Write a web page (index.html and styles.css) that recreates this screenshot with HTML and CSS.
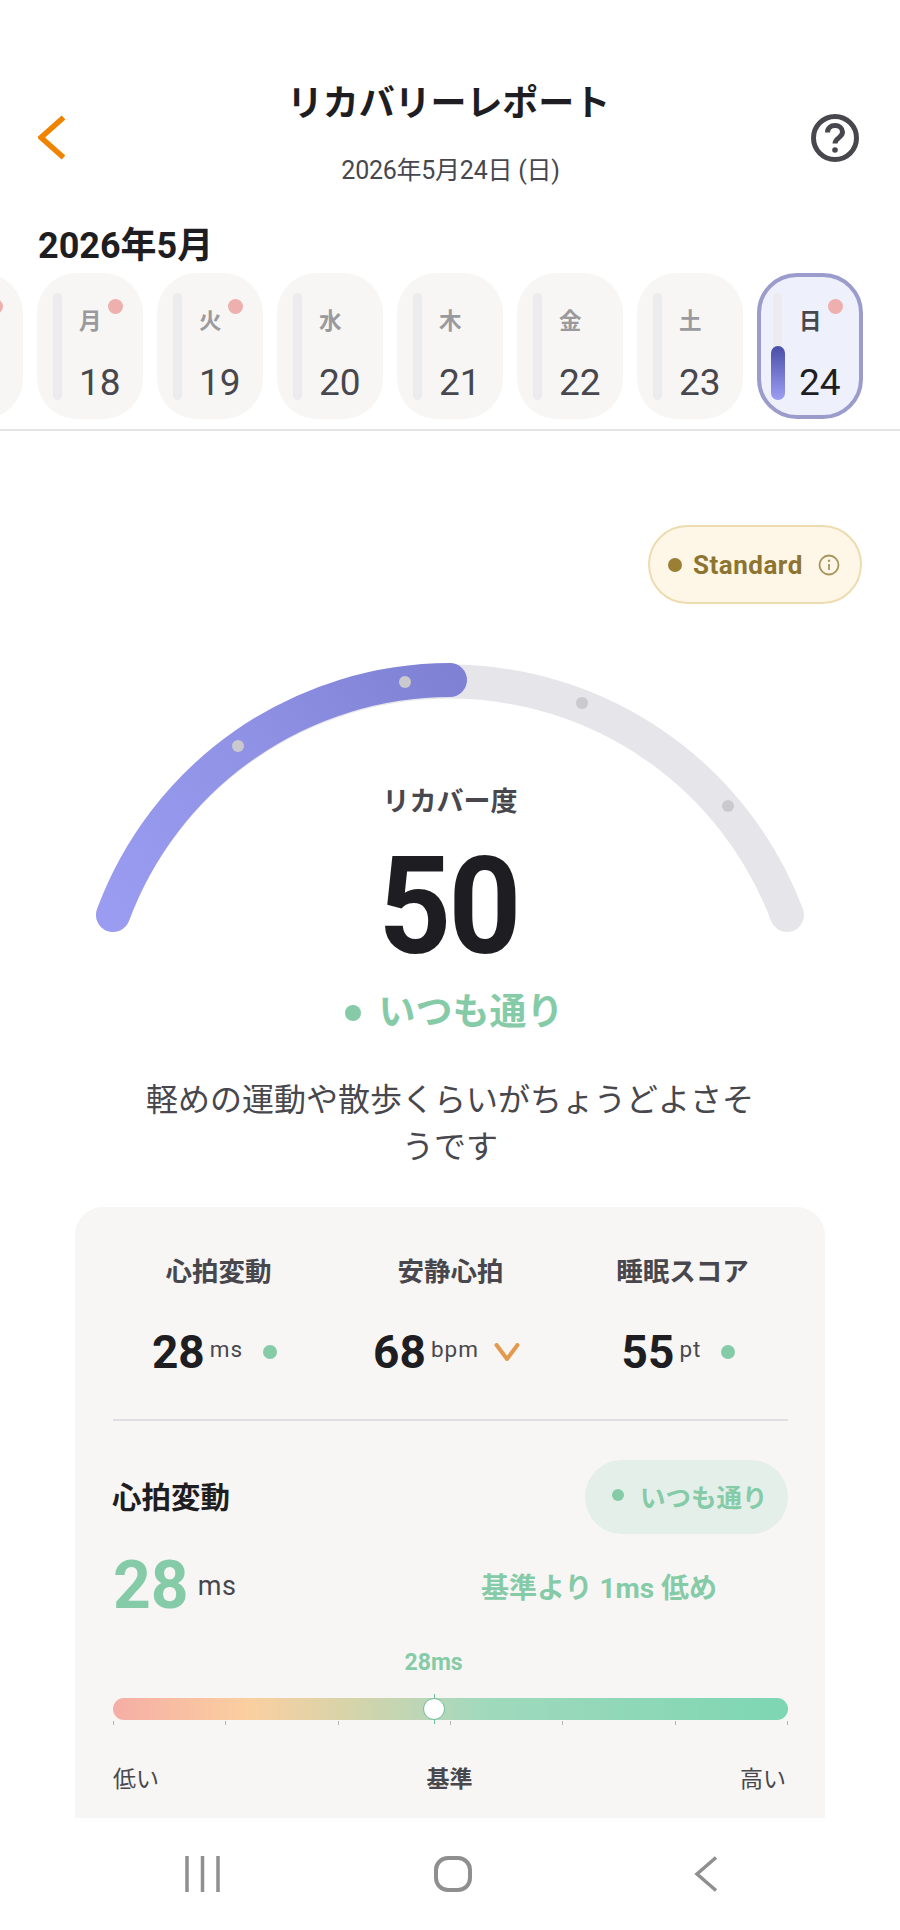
FILE: index.html
```html
<!DOCTYPE html>
<html lang="ja">
<head>
<meta charset="utf-8">
<title>リカバリーレポート</title>
<link rel="stylesheet" href="styles.css">
</head>
<body>
<div class="screen">
  <main class="content">
    <header class="header">
      <svg class="back" viewBox="0 0 28 45" aria-hidden="true"><path d="M25.5 2.5 3 22.5l22.5 20"/></svg>
      <div class="heading">
        <h1 class="title">リカバリーレポート</h1>
        <p class="date">2026年5月24日 (日)</p>
      </div>
      <svg class="help" viewBox="0 0 48 48" aria-hidden="true">
        <circle cx="24" cy="24" r="21.5"/>
        <path d="M16.5 18.5c0-4.4 3.3-7 7.5-7s7.5 2.8 7.5 6.6c0 5.6-7.5 5.9-7.5 11.4"/>
        <circle class="help-dot" cx="24" cy="36" r="2.8"/>
      </svg>
    </header>

    <h2 class="month">2026年5月</h2>
    <div class="strip">
      <div class="day"><span class="bar"></span><span class="mark"></span></div>
      <div class="day"><span class="bar"></span><span class="mark"></span><span class="dow">月</span><span class="num">18</span></div>
      <div class="day"><span class="bar"></span><span class="mark"></span><span class="dow">火</span><span class="num">19</span></div>
      <div class="day"><span class="bar"></span><span class="dow">水</span><span class="num">20</span></div>
      <div class="day"><span class="bar"></span><span class="dow">木</span><span class="num">21</span></div>
      <div class="day"><span class="bar"></span><span class="dow">金</span><span class="num">22</span></div>
      <div class="day"><span class="bar"></span><span class="dow">土</span><span class="num">23</span></div>
      <div class="day today"><span class="bar"><span class="fill"></span></span><span class="mark"></span><span class="dow">日</span><span class="num">24</span></div>
    </div>

    <div class="badge-row">
      <div class="badge">
        <span class="badge-dot"></span>
        <span class="badge-text">Standard</span>
        <svg class="info" viewBox="0 0 22 22" aria-hidden="true">
          <circle cx="11" cy="11" r="9.5"/>
          <path d="M11 10v6"/>
          <circle class="info-dot" cx="11" cy="6.8" r="1.2"/>
        </svg>
      </div>
    </div>

    <section class="gauge">
      <svg class="arc" viewBox="0 640 900 300" aria-hidden="true">
        <defs>
          <linearGradient id="prog" gradientUnits="userSpaceOnUse" x1="113" y1="916" x2="450" y2="681">
            <stop offset="0" stop-color="#999cf0"/>
            <stop offset="0.5" stop-color="#9092e6"/>
            <stop offset="1" stop-color="#7f81d4"/>
          </linearGradient>
        </defs>
        <path class="arc-track" d="M113 916A360 360 0 0 1 787 916"/>
        <path class="arc-fill" d="M113 916A360 360 0 0 1 450 681"/>
        <circle class="arc-dot" cx="238" cy="747" r="6"/>
        <circle class="arc-dot" cx="405" cy="683" r="6"/>
        <circle class="arc-dot" cx="582" cy="704" r="6"/>
        <circle class="arc-dot" cx="728" cy="807" r="6"/>
      </svg>
      <div class="gauge-text">
        <div class="gauge-label">リカバー度</div>
        <div class="gauge-value">50</div>
        <div class="gauge-status"><span class="status-dot"></span>いつも通り</div>
        <p class="advice">軽めの運動や散歩くらいがちょうどよさそうです</p>
      </div>
    </section>

    <section class="card">
      <div class="stats">
        <div class="stat">
          <div class="stat-label">心拍変動</div>
          <div class="stat-value"><span class="stat-num">28</span><span class="stat-unit">ms</span><span class="stat-dot"></span></div>
        </div>
        <div class="stat">
          <div class="stat-label">安静心拍</div>
          <div class="stat-value"><span class="stat-num">68</span><span class="stat-unit">bpm</span>
            <svg class="stat-chev" viewBox="0 0 26 18" aria-hidden="true"><path d="M2.500 2l10.500 14L23.500 2"/></svg>
          </div>
        </div>
        <div class="stat">
          <div class="stat-label">睡眠スコア</div>
          <div class="stat-value"><span class="stat-num">55</span><span class="stat-unit">pt</span><span class="stat-dot"></span></div>
        </div>
      </div>
      <hr class="rule">
      <div class="detail-head">
        <h3 class="detail-title">心拍変動</h3>
        <div class="pill"><span class="pill-dot"></span>いつも通り</div>
      </div>
      <div class="detail-main">
        <div class="detail-value"><span class="big">28</span><span class="big-unit">ms</span></div>
        <div class="delta">基準より 1ms 低め</div>
      </div>
      <div class="scale">
        <span class="scale-val" style="left:47.5%">28ms</span>
        <div class="track">
          <span class="thumb-line" style="left:47.5%"></span>
          <span class="thumb" style="left:47.5%"></span>
        </div>
        <div class="ticks"><i></i><i></i><i></i><i></i><i></i><i></i><i></i></div>
      </div>
      <div class="scale-labels"><span>低い</span><span class="mid">基準</span><span>高い</span></div>
    </section>
  </main>

  <nav class="nav">
    <svg class="nav-recent" viewBox="0 0 35 36" aria-hidden="true"><path d="M2 0v36M17.500 0v36M33 0v36"/></svg>
    <svg class="nav-home" viewBox="0 0 38 36" aria-hidden="true"><rect x="2" y="2" width="34" height="32" rx="12"/></svg>
    <svg class="nav-back" viewBox="0 0 24 36" aria-hidden="true"><path d="M22 1.500 3 18l19 16.500"/></svg>
  </nav>
</div>
</body>
</html>
```
FILE: styles.css
```css
* { box-sizing: border-box; }
html, body { margin: 0; padding: 0; background: #fff; }
body {
  font-family: Roboto, "Noto Sans CJK JP", sans-serif;
  color: #1e1e22;
}
.screen {
  width: 900px;
  height: 1930px;
  display: flex;
  flex-direction: column;
  overflow: hidden;
}
.content { height: 1818px; overflow: hidden; flex: none; }

/* header */
.header {
  display: grid;
  grid-template-columns: 1fr auto 1fr;
  align-items: center;
  padding: 74px 41px 0 38px;
}
.back { width: 28px; height: 45px; margin-top: 12px; fill: none; stroke: #f08300; stroke-width: 5.5; }
.help { width: 48px; height: 48px; margin-top: 14px; justify-self: end; fill: none; stroke: #47474d; stroke-width: 5; }
.help-dot { fill: #47474d; stroke: none; }
.heading { text-align: center; }
.title { margin: 0; font-size: 36px; line-height: 60px; font-weight: 700; letter-spacing: -0.1px; }
.date { margin: 20px 0 0; padding-left: 4px; font-size: 25px; line-height: 34px; letter-spacing: -0.25px; color: #47474d; }

/* week strip */
.month { margin: 38px 0 0 38px; font-size: 36px; line-height: 40px; font-weight: 700; }
.strip {
  display: flex;
  gap: 14px;
  margin-top: 7px;
  padding-bottom: 10px;
  margin-left: -83px;
  width: 983px;
  border-bottom: 2px solid #e4e4e7;
}
.day {
  position: relative;
  flex: none;
  width: 106px;
  height: 146px;
  border-radius: 40px;
  background: #f7f6f4;
  padding: 20px 0 0 42px;
  display: flex;
  flex-direction: column;
}
.bar {
  position: absolute;
  left: 16px;
  top: 20px;
  bottom: 19px;
  width: 9px;
  border-radius: 5px;
  background: #ececee;
}
.mark {
  position: absolute;
  right: 20px;
  top: 26px;
  width: 15px;
  height: 15px;
  border-radius: 50%;
  background: #eeb0ae;
}
.dow { font-size: 22.5px; line-height: 30px; margin-top: 13px; font-weight: 700; color: #9a9a9e; }
.num { font-size: 37px; line-height: 44px; margin-top: 24.5px; color: #47474d; }
.today { background: #eef0fb; border: 4px solid #9b9ccb; padding: 16px 0 0 38px; }
.today .bar { left: 12px; top: 16px; bottom: 15px; }
.today .mark { right: 16px; top: 22px; }
.today .dow { color: #47474d; }
.today .num { color: #1e1e22; }
.fill {
  position: absolute;
  left: -2.500px;
  bottom: 0;
  width: 14px;
  height: 54px;
  border-radius: 7px;
  background: linear-gradient(#4a4ea6, #9c9ff2);
}

/* badge */
.badge-row { display: flex; justify-content: flex-end; padding-right: 38px; margin-top: 94px; }
.badge {
  display: flex;
  align-items: center;
  width: 214px;
  height: 79px;
  padding-left: 18px;
  border-radius: 40px;
  background: #fef6e7;
  border: 2.500px solid #ecdcb0;
}
.badge-dot { width: 14px; height: 14px; border-radius: 50%; background: #9a7f35; }
.badge-text { margin-left: 11px; font-size: 26px; font-weight: 700; letter-spacing: 0.5px; color: #8d7430; }
.info { width: 22px; height: 22px; margin-left: 15px; fill: none; stroke: #a8945c; stroke-width: 1.800; }
.info-dot { fill: #a8945c; stroke: none; }

/* gauge */
.gauge { display: grid; margin-top: 35px; }
.arc, .gauge-text { grid-area: 1 / 1; }
.arc { width: 900px; height: 300px; display: block; }
.arc-track, .arc-fill { fill: none; stroke-width: 34; stroke-linecap: round; }
.arc-track { stroke: #e5e5ea; }
.arc-fill { stroke: url(#prog); }
.arc-dot { fill: #c9c9ce; }
.gauge-text { padding-top: 143px; text-align: center; }
.gauge-label { font-size: 27px; line-height: 40px; font-weight: 700; color: #47474d; }
.gauge-value { margin: 20px 3px 0 0; font-size: 135px; line-height: 130px; font-weight: 700; letter-spacing: -3px; transform: scaleX(0.94); }
.gauge-status {
  display: flex;
  justify-content: center;
  align-items: center;
  gap: 18px;
  margin-top: 16px;
  padding-left: 8px;
  font-size: 37px;
  line-height: 50px;
  font-weight: 700;
  color: #85cba8;
}
.status-dot { width: 16px; height: 16px; border-radius: 50%; background: #85cba8; }
.advice {
  width: 620px;
  margin: 38.500px auto 0;
  font-size: 32px;
  line-height: 47px;
  color: #47474d;
}

/* card */
.card {
  width: 750px;
  margin: 36px 0 0 75px;
  padding: 47px 37px 0 38px;
  height: 720px;
  border-radius: 28px;
  background: #f7f6f4;
}
.stats { display: grid; grid-template-columns: repeat(3, 232px); margin: 0 -10.500px; }
.stat { text-align: center; }
.stat-label { font-size: 26.5px; line-height: 36px; font-weight: 700; color: #47474d; }
.stat-value { display: flex; justify-content: center; align-items: center; margin: 34px 8px 0 0; height: 56px; }
.stat-num { font-size: 46px; line-height: 56px; font-weight: 700; }
.stat-unit { font-size: 22.5px; margin: 0 0 6px 5px; letter-spacing: 1px; color: #47474d; }
.stat-dot { width: 14px; height: 14px; margin-left: 20px; border-radius: 50%; background: #85cba8; }
.stat-chev { width: 26px; height: 18px; margin: 0 0 0 15px; fill: none; stroke: #e39a4e; stroke-width: 4; stroke-linecap: round; stroke-linejoin: round; }
.rule { margin: 39px 0 0; border: 0; height: 2px; background: #dfdfe1; }

.detail-head { display: flex; justify-content: space-between; align-items: center; margin-top: 39px; }
.detail-title { margin: 0 0 4px -1px; font-size: 29.5px; font-weight: 700; }
.pill {
  display: flex;
  align-items: center;
  gap: 16px;
  width: 203px;
  height: 74px;
  padding: 0 0 3px 27px;
  border-radius: 37px;
  background: #e4efe9;
  font-size: 25.5px;
  font-weight: 700;
  color: #85cba8;
}
.pill-dot { width: 12px; height: 12px; border-radius: 50%; background: #85cba8; }
.detail-main { display: flex; align-items: center; margin-top: 12px; height: 80px; }
.detail-value { display: flex; align-items: center; width: 368px; }
.big { font-size: 66px; line-height: 80px; font-weight: 700; color: #85cba8; }
.big-unit { margin-left: 9px; font-size: 27px; letter-spacing: 0.5px; color: #47474d; }
.delta { font-size: 28px; font-weight: 700; color: #85cba8; }

.scale { position: relative; margin-top: 72px; }
.scale-val {
  position: absolute;
  top: -50px;
  transform: translateX(-50%);
  font-size: 23px;
  line-height: 30px;
  font-weight: 700;
  color: #85cba8;
}
.track {
  position: relative;
  height: 22px;
  border-radius: 11px;
  background: linear-gradient(90deg, #f5aea5 0%, #fbcfa0 20%, #d4d4aa 36%, #b8d6b8 47%, #a0d9bc 55%, #7dd6b2 100%);
}
.thumb-line {
  position: absolute;
  top: -4px;
  bottom: -4px;
  width: 1px;
  background: #6fbf9a;
}
.thumb {
  position: absolute;
  top: 0;
  width: 22px;
  height: 22px;
  margin-left: -11px;
  border-radius: 50%;
  background: #fff;
  border: 1.500px solid #6fbf9a;
}
.ticks { display: flex; justify-content: space-between; margin-top: 1px; }
.ticks i { display: block; width: 1px; height: 4px; background: #b5b5b8; }
.scale-labels {
  display: flex;
  justify-content: space-between;
  margin-top: 38px;
  padding-right: 2px;
  font-size: 23px;
  line-height: 34px;
  color: #47474d;
}
.mid { font-weight: 700; }

/* system nav */
.nav {
  flex: 1;
  display: flex;
  align-items: flex-start;
  justify-content: space-between;
  padding: 38px 182px 0 185px;
  background: #fff;
}
.nav svg { display: block; fill: none; stroke: #8f8f8f; }
.nav-recent { width: 35px; height: 36px; stroke-width: 3.500; }
.nav-home { width: 38px; height: 36px; margin-right: 8px; stroke-width: 4; }
.nav-back { width: 24px; height: 36px; stroke-width: 3.500; }
```
